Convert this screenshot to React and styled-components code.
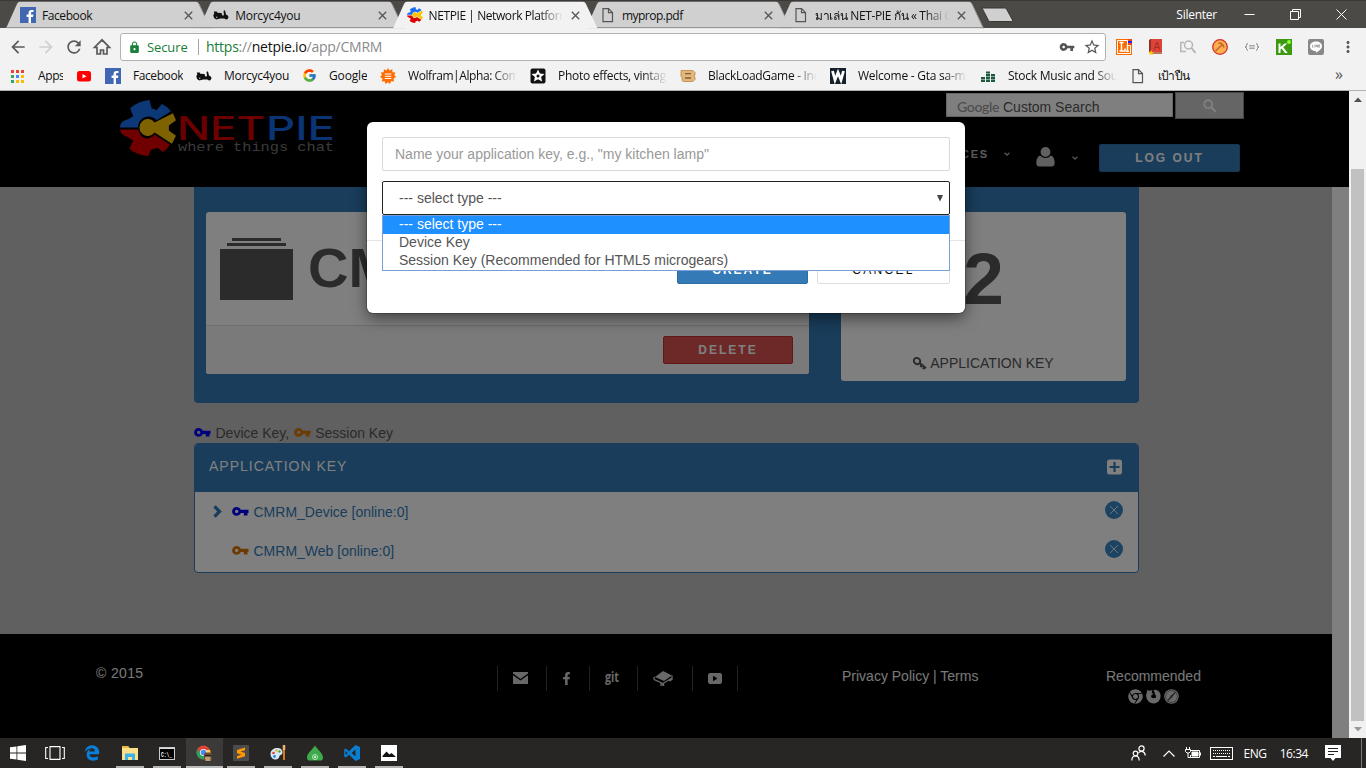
import React from 'react';
import styled, { createGlobalStyle } from 'styled-components';
import { MdArrowBack, MdArrowForward, MdRefresh, MdLock, MdVpnKey, MdStarBorder, MdMoreVert } from 'react-icons/md';
import { FaFacebookF, FaChrome, FaEdgeLegacy } from 'react-icons/fa';
import { FcGoogle } from 'react-icons/fc';

const GlobalStyle = createGlobalStyle`
  * { box-sizing: border-box; }
  body { margin: 0; overflow: hidden; }
  svg { display: block; flex: none; }
`;

const uiFont = '"Open Sans", "Noto Sans", sans-serif';
const pageFont = '"Liberation Sans", Arial, sans-serif';

const Screen = styled.div`
  width: 1366px;
  height: 768px;
  display: flex;
  flex-direction: column;
  overflow: hidden;
  font-family: ${uiFont};
  font-size: 12px;
  color: #111;
`;

/* ---------- browser tabs ---------- */
const TabStrip = styled.div`
  height: 28px;
  flex: none;
  display: flex;
  padding-left: 6px;
  background: #4b4a47;
  border-top: 1px solid #3d3838;
`;
const TabBox = styled.div`
  position: relative;
  z-index: ${p => (p.$active ? 2 : 1)};
  width: 193.3px;
  flex: none;
  height: 27px;
  display: flex;
  align-items: center;
  padding: 1px 5px 0 14px;
`;
const TabShape = styled.svg`
  position: absolute;
  left: 0;
  top: 0;
  z-index: -1;
`;
const FadeText = styled.span`
  width: ${p => p.$w}px;
  flex: none;
  white-space: nowrap;
  overflow: hidden;
  letter-spacing: ${p => p.$ls ?? -0.42}px;
  ${p => p.$fade && 'mask-image: linear-gradient(to right, #000 calc(100% - 24px), transparent);'}
`;
const TabTitle = styled(FadeText)`
  margin-left: 6px;
  flex: 1;
`;
const CloseX = styled.svg`
  margin: 0 1px 0 8px;
`;
const NewTab = styled.svg`
  margin: 6px 0 0 9px;
`;
const WindowControls = styled.div`
  margin-left: auto;
  padding-right: 19px;
  display: flex;
  align-items: center;
  color: #fff;
  letter-spacing: -0.25px;
  svg { margin-left: 35px; }
  svg:first-of-type { margin-left: 27px; }
`;

/* ---------- toolbar and bookmarks ---------- */
const Toolbar = styled.div`
  height: 34px;
  flex: none;
  display: flex;
  align-items: center;
  padding: 4px 8px 0 8px;
  background: #f2f2f2;
`;
const NavIcons = styled.div`
  display: flex;
  gap: 8px;
  width: 112px;
  color: #5a5a5a;
  svg:nth-child(2) { color: #cfcfcf; }
`;
const Omnibox = styled.div`
  width: 986px;
  height: 28px;
  display: flex;
  align-items: center;
  gap: 8px;
  padding: 0 4px 0 7px;
  background: #fff;
  border: 1px solid #b2b2b2;
  border-radius: 3px;
  font-size: 14px;
  color: #8a8a8a;
  > svg { color: #555; }
`;
const Secure = styled.span`
  display: flex;
  align-items: center;
  gap: 6px;
  color: #188038;
  width: 71px;
  font-size: 13px;
  border-right: 1px solid #a5a5a5;
  line-height: 16px;
  letter-spacing: -0.1px;
`;
const Url = styled.span`
  flex: 1;
  margin-left: -1px;
  margin-top: -1px;
  letter-spacing: -0.25px;
  b { font-weight: 400; color: #111; }
  i { font-style: normal; color: #188038; }
`;
const Extensions = styled.div`
  display: flex;
  align-items: center;
  gap: 16px;
  margin-left: 10px;
  > svg:last-child { margin-left: -1px; color: #555; }
`;
const Bookmarks = styled.div`
  height: 29px;
  flex: none;
  display: flex;
  align-items: center;
  gap: 13px;
  padding: 0 0 1px 10px;
  background: #f2f2f2;
  border-bottom: 1px solid #b0b0b0;
`;
const BookmarkItem = styled.div`
  display: flex;
  align-items: center;
  gap: 12px;
`;
const Overflow = styled.span`
  margin: -3px 0 0 auto;
  padding-right: 23px;
  font-size: 16px;
  color: #555;
`;

/* ---------- page ---------- */
const Viewport = styled.div`
  position: relative;
  height: 647px;
  flex: none;
  display: flex;
  font-family: ${pageFont};
  font-size: 14px;
`;
const Page = styled.div`
  width: 1349px;
  display: flex;
  flex-direction: column;
  background: #fff;
`;
const Header = styled.header`
  height: 96px;
  flex: none;
  display: flex;
  justify-content: space-between;
  padding: 0 105px 0 119px;
  background: #000;
`;
const Logo = styled.svg`
  margin-top: 8px;
`;
const HeaderRight = styled.div`
  display: flex;
  flex-direction: column;
  width: 298px;
`;
const SearchRow = styled.div`
  display: flex;
  align-items: flex-start;
  gap: 2px;
  padding-top: 1px;
`;
const SearchBox = styled.div`
  width: 227px;
  height: 24px;
  margin-top: 1px;
  padding-left: 10px;
  background: #fff;
  border: 1px solid #cfcfcf;
  line-height: 26px;
  color: #555;
  span {
    font-family: Lato, sans-serif;
    font-size: 14px;
    font-weight: 500;
    letter-spacing: -0.35px;
    color: #9a9a9a;
    margin-right: 4px;
  }
`;
const SearchButton = styled.div`
  width: 69px;
  height: 27px;
  display: flex;
  align-items: center;
  justify-content: center;
  background: #cbcbcb;
  border: 1px solid #8c8c8c;
`;
const NavRow = styled.div`
  display: flex;
  justify-content: flex-end;
  align-items: center;
  margin-top: 25px;
  height: 28px;
  padding-right: 4px;
`;
const NavLabel = styled.span`
  font-size: 11px;
  font-weight: 700;
  letter-spacing: 1.8px;
  color: #bbb;
  margin: -8px 15px 0 0;
`;
const Caret = styled.svg`
  margin-top: ${p => p.$top}px;
  margin-right: ${p => p.$right}px;
`;
const UserGlyph = styled.svg`
  margin: -3px 17px 0 0;
`;
const Button = styled.div`
  width: ${p => p.$w}px;
  height: 28px;
  flex: none;
  display: flex;
  align-items: center;
  justify-content: center;
  background: ${p => p.$bg};
  border: 1px solid ${p => p.$border};
  border-radius: 2px;
  color: ${p => p.$color ?? '#fff'};
  font-size: 12px;
  font-weight: ${p => p.$weight ?? 700};
  letter-spacing: ${p => p.$ls ?? 2}px;
`;
const Body = styled.div`
  width: 1332px;
  height: 447px;
  flex: none;
  padding-left: 194px;
  background: #c0c0c0;
`;
const Hero = styled.section`
  width: 945px;
  height: 216px;
  display: flex;
  justify-content: space-between;
  align-items: flex-start;
  padding: 25px 13px 0 12px;
  background: #337ab7;
  border-radius: 0 0 4px 4px;
`;
const AppCard = styled.div`
  width: 603px;
  height: 162px;
  background: #fff;
  border-radius: 3px;
  overflow: hidden;
`;
const AppTitle = styled.div`
  display: flex;
  align-items: center;
  height: 113px;
  padding: 0 0 2px 14px;
  font-size: 56px;
  font-weight: 700;
  color: #565656;
  gap: 15px;
  svg { margin-top: 2px; }
`;
const AppFooter = styled.div`
  height: 49px;
  display: flex;
  align-items: center;
  justify-content: flex-end;
  padding-right: 16px;
  background: #f5f5f5;
  border-top: 1px solid #ddd;
`;
const CountCard = styled.div`
  width: 285px;
  height: 169px;
  display: flex;
  flex-direction: column;
  align-items: center;
  background: #fff;
  border-radius: 3px;
  color: #555;
`;
const Count = styled.div`
  font-size: 73px;
  line-height: 80px;
  font-weight: 700;
  color: #565656;
  margin-top: 27px;
`;
const CountLabel = styled.div`
  display: flex;
  align-items: center;
  gap: 3px;
  margin-top: 36px;
`;
const Legend = styled.div`
  display: flex;
  align-items: center;
  gap: 4.5px;
  height: 20px;
  margin-top: 20px;
  color: #555;
`;
const KeyPanel = styled.section`
  width: 945px;
  height: 130px;
  background: #fff;
  border: 1px solid #337ab7;
  border-radius: 4px;
  overflow: hidden;
`;
const KeyPanelHead = styled.div`
  height: 48px;
  display: flex;
  align-items: center;
  justify-content: space-between;
  padding: 0 16px 4px 14px;
  background: #337ab7;
  color: #fff;
  letter-spacing: 1px;
  svg { margin-top: 2px; }
`;
const KeyRow = styled.div`
  height: 39px;
  display: flex;
  align-items: center;
  padding: 0 15px 0 17px;
  color: #337ab7;
  > span { flex: 1; margin-left: 4.5px; }
  > svg:last-child { margin-top: -4px; }
`;
const ChevronSlot = styled.div`
  width: 20px;
`;
const Footer = styled.footer`
  width: 1332px;
  height: 104px;
  display: flex;
  padding: 31px 0 0 96px;
  background: #000;
  color: #f0f0f0;
`;
const Copyright = styled.div`
  width: 401px;
  letter-spacing: 0.35px;
`;
const SocialList = styled.div`
  display: flex;
  height: 25px;
  width: 345px;
  margin-top: 1px;
`;
const Social = styled.div`
  width: ${p => p.$w}px;
  height: 25px;
  display: flex;
  align-items: center;
  justify-content: center;
  padding: 0 ${p => p.$pad ?? 4}px 1px 0;
  border-left: 1px solid #444;
  color: #d0d0d0;
`;
const Links = styled.div`
  width: 264px;
  padding-top: 3px;
`;
const Recommended = styled.div`
  padding-top: 3px;
  display: flex;
  flex-direction: column;
  align-items: center;
  gap: 5px;
  height: 40px;
  div { display: flex; gap: 3px; color: #d5d5d5; }
`;

/* ---------- modal ---------- */
const Overlay = styled.div`
  position: absolute;
  inset: 0 17px 0 0;
  padding-left: 367px;
  padding-top: 31px;
  overflow: hidden;
  background: rgba(0, 0, 0, 0.5);
`;
const Modal = styled.div`
  position: relative;
  width: 598px;
  height: 191px;
  background: #fff;
  border-radius: 6px;
  box-shadow: 0 5px 15px rgba(0, 0, 0, 0.5), 0 0 0 1px rgba(0, 0, 0, 0.2);
`;
const ModalBody = styled.div`
  height: 119px;
  padding: 15px 15px 0;
  border-bottom: 1px solid #e5e5e5;
`;
const Field = styled.div`
  height: 34px;
  display: flex;
  align-items: center;
  justify-content: space-between;
  padding: 0 ${p => (p.$select ? '6px 0 16px' : '12px')};
  margin-bottom: 10px;
  border: 1px solid ${p => (p.$select ? '#222' : '#d9d9d9')};
  border-radius: 2px;
  color: ${p => (p.$select ? '#555' : '#999')};
`;
const ModalFooter = styled.div`
  display: flex;
  justify-content: flex-end;
  gap: 9px;
  padding: 15px 15px 0;
`;
const Options = styled.div`
  position: absolute;
  left: 15px;
  top: 93px;
  width: 568px;
  height: 56px;
  background: #fff;
  border: 1px solid #7a9fd6;
`;
const Option = styled.div`
  height: 18px;
  line-height: 16px;
  padding-left: 16px;
  color: ${p => (p.$on ? '#fff' : '#555')};
  background: ${p => (p.$on ? '#1e90ff' : '#fff')};
`;

/* ---------- scrollbar ---------- */
const Scrollbar = styled.div`
  width: 17px;
  display: flex;
  flex-direction: column;
  align-items: center;
  padding: 6px 0 6px;
  background: #f1f1f1;
`;
const Thumb = styled.div`
  width: 13px;
  height: 552px;
  margin: 67px 0 auto;
  background: #c1c1c1;
`;

/* ---------- taskbar ---------- */
const Taskbar = styled.div`
  height: 30px;
  flex: none;
  display: flex;
  background: #272624;
  color: #fff;
`;
const Task = styled.div`
  width: ${p => p.$w ?? 37}px;
  height: 30px;
  display: flex;
  align-items: center;
  justify-content: center;
  background: ${p => (p.$active ? '#3b3a39' : 'none')};
  box-shadow: ${p => (p.$active ? 'inset 0 -2px #bdbcba' : 'none')};
`;
const Running = styled.div`
  width: 28px;
  height: 30px;
  display: flex;
  align-items: center;
  justify-content: center;
  border-bottom: ${p => (p.$line ? '2px solid #b5b4b2' : '0')};
  padding-top: ${p => (p.$line ? 2 : 0)}px;
`;
const Tray = styled.div`
  margin-left: auto;
  display: flex;
  align-items: center;
  padding-right: 4px;
  font-size: 12px;
`;
const TrayItem = styled.div`
  margin-right: ${p => p.$r}px;
  letter-spacing: -0.45px;
`;
const DesktopEdge = styled.div`
  width: 1px;
  height: 30px;
  background: #777;
`;

/* ---------- drawings ---------- */
const FacebookIcon = () => (
  <svg width="16" height="16" viewBox="0 0 16 16">
    <rect width="16" height="16" fill="#4267b2" />
    <path d="M11 16V10h2l.4-2.4H11V6.2c0-.8.4-1.2 1.200-1.200h1.300V2.900h-2C9.500 2.900 8.600 4.200 8.600 5.900v1.700h-2V10h2v6z" fill="#fff" />
  </svg>
);
const Gear = ({ size = 16 }) => (
  <svg width={size} height={size} viewBox="0 0 55 55">
    <path d="M0 27C0 23 3 20 8 19L13 16 10 8Q18 1 29 0L31 8 36 10 41 4Q46 6 50 11L36 20C29 12 17 18 18 27z" fill="#1a70f0" />
    <path d="M0 29H18C20 39 29 40 34 34L49 44Q46 49 42 51L37 47 30 49 28 55Q18 55 9 48L13 40 7 36Q1 35 0 29z" fill="#e00000" />
    <path d="M34 22 52 13 55 20 48 25V30L55 35 51 43 34 32A8.300 8.300 0 1 1 34 22z" fill="#ffc500" />
  </svg>
);
const Scooter = () => (
  <svg width="16" height="16" viewBox="0 0 16 16" fill="#111">
    <path d="M.8 4.500h3l.5 1.200 4.200.3.800 2.500 1.700-.3L10.500 4l1.300-.8.500 1.300L13 7.500l2 1.200.5 1.800-2-.7-1.500 1.700H7L5.500 12 1 11 .3 8l1-1.500z" />
    <circle cx="3.700" cy="10" r="2.400" /><circle cx="13.300" cy="10.500" r="1.900" /><circle cx="3.700" cy="10.200" r=".8" fill="#aaa" />
  </svg>
);
const PageIcon = () => (
  <svg width="16" height="16" viewBox="0 0 16 16" fill="none" stroke="#555" strokeWidth="1.200">
    <path d="M3 1.600h5.500l4 4v9H3z" /><path d="M8.500 1.600v4h4" />
  </svg>
);
const AppsIcon = () => (
  <svg width="16" height="16" viewBox="0 0 16 16">
    {['#ea4335', '#ea4335', '#ea4335', '#34a853', '#4285f4', '#fbbc05', '#34a853', '#fbbc05', '#fbbc05'].map((c, i) => (
      <rect key={i} x={1 + (i % 3) * 5} y={2 + Math.floor(i / 3) * 5} width="3" height="3" fill={c} />
    ))}
  </svg>
);
const YoutubeIcon = () => (
  <svg width="16" height="16" viewBox="0 0 16 16"><rect x="1" y="3" width="14" height="10.500" rx="2.500" fill="#f00" /><path d="M6.500 6v4.600l4-2.300z" fill="#fff" /></svg>
);
const WolframIcon = () => (
  <svg width="16" height="16" viewBox="0 0 16 16">
    <path d="M8 0L9.500 2.500 12.300 1.200 12.500 4.200 15.500 4.500 14.200 7 16 9 13.500 10.500 14 13.500 11 13.300 10 16 8 14.200 5.500 16 4.700 13.200 1.800 13.500 2.500 10.500 0 9 2 7 .7 4.400 3.600 4.200 4 1.300 6.600 2.500z" fill="#ff6d00" />
    <path d="M4.800 6h6.500M4.800 8.300h6.500M4.800 10.500h6.500" stroke="#fff" strokeWidth="1" />
  </svg>
);
const PolarrIcon = () => (
  <svg width="16" height="16" viewBox="0 0 16 16"><rect x=".5" y=".5" width="15" height="15" rx="2" fill="#111" /><path d="M8 1.500l1.900 4 4.600.5-3.400 3 1 4.600L8 11.300l-4.100 2.300 1-4.600-3.400-3L6.100 5.500z" fill="#fff" /><circle cx="8" cy="8" r="1.500" fill="#111" /></svg>
);
const BlackLoadIcon = () => (
  <svg width="16" height="16" viewBox="0 0 16 16"><path d="M1 2.500h12l2 2v2.500l-1 1 1 1.500v2l-2 2H3l-1-1V9.500L1 8.500z" fill="#e3b67c" stroke="#b98743" strokeWidth=".8" /><path d="M5 5.700h6M5 10h6" stroke="#806038" strokeWidth="1.300" /></svg>
);
const WIcon = () => (
  <svg width="16" height="16" viewBox="0 0 16 16"><rect width="16" height="16" fill="#14202b" /><path d="M2.500 3l2.500 9L8 4.500 11 12l2.500-9" fill="none" stroke="#fff" strokeWidth="2.800" /></svg>
);
const BarsIcon = () => (
  <svg width="16" height="16" viewBox="0 0 16 16"><path d="M3 14V8.500M8 14V3.500M13 14V6" stroke="#1d5a40" strokeWidth="4" strokeDasharray="2.300 .5" /></svg>
);
const HomeIcon = () => (
  <svg width="20" height="20" viewBox="0 0 20 20" fill="none" stroke="#5a5a5a" strokeWidth="1.700"><path d="M10 2.800L2.500 10.500H5V17h3.500v-4h3v4H15v-6.500h2.500z" /></svg>
);
const Magnifier = () => (
  <svg width="14" height="14" viewBox="0 0 14 14" fill="none" stroke="#fff"><circle cx="5.200" cy="5.200" r="3.900" strokeWidth="1.900" /><path d="M8 8l4.800 4.800" strokeWidth="2.300" /></svg>
);
const Close = () => (
  <CloseX width="9" height="9" viewBox="0 0 9 9" stroke="#555" strokeWidth="1.300"><path d="M.8.8l7.400 7.400M8.200.8L.8 8.200" /></CloseX>
);

const Tab = ({ icon, title, active, fade, ls }) => (
  <TabBox $active={active}>
    <TabShape width="206" height="28" viewBox="0 0 206 28">
      <path d="M0 27.500 L11 3 Q12 .8 14 .8 H190 Q192 .8 193 3 L204.500 27.500z" fill={active ? '#f2f2f2' : '#d0d0d0'} />
      {!active && <path d="M0 26.500H204.500M204.500 27.500L193 3" stroke="#959595" fill="none" />}
    </TabShape>
    {icon}
    <TabTitle $fade={fade} $ls={ls}>{title}</TabTitle>
    <Close />
  </TabBox>
);
const Bookmark = ({ icon, text, w, fade, ls }) => (
  <BookmarkItem>{icon}{text && <FadeText $w={w} $fade={fade} $ls={ls}>{text}</FadeText>}</BookmarkItem>
);
const DeleteKey = () => (
  <svg width="18" height="18" viewBox="0 0 18 18"><circle cx="9" cy="9" r="9" fill="#3a87c4" /><path d="M5 5l8 8M13 5l-8 8" stroke="#e6e6e6" strokeWidth="1" /></svg>
);
const KeyGlyph = ({ color }) => (
  <svg width="17" height="12" viewBox="0 0 17 12"><path d="M4.500 1C6.500 1 8 2 8.800 3.800H16.500V7H15.500V9.500H11.800V7H8.800C8 8.700 6.500 9.800 4.500 9.800A4.400 4.400 0 0 1 4.500 1zM4.700 3.700A1.700 1.700 0 1 0 4.700 7.100 1.700 1.700 0 0 0 4.700 3.700z" fill={color} fillRule="evenodd" /></svg>
);
const Down = ({ top, right }) => (
  <Caret $top={top} $right={right} width="6" height="4" viewBox="0 0 6 4" fill="none" stroke="#aaa" strokeWidth="1.300"><path d="M.5.7L3 3 5.500.7" /></Caret>
);

const tabs = [
  { icon: <FacebookIcon />, title: 'Facebook' },
  { icon: <Scooter />, title: 'Morcyc4you', ls: -0.28 },
  { icon: <Gear />, title: 'NETPIE | Network Platform', active: true, fade: true },
  { icon: <PageIcon />, title: 'myprop.pdf', ls: -0.5 },
  { icon: <PageIcon />, title: 'มาเล่น NET-PIE กัน « Thai C', fade: true, ls: -0.35 },
];
const bookmarks = [
  { icon: <AppsIcon />, text: 'Apps', w: 25, ls: -0.4 },
  { icon: <YoutubeIcon /> },
  { icon: <FacebookIcon />, text: 'Facebook', w: 50 },
  { icon: <Scooter />, text: 'Morcyc4you', w: 65, ls: -0.28 },
  { icon: <FcGoogle size={15} />, text: 'Google', w: 38, ls: -0.15 },
  { icon: <WolframIcon />, text: 'Wolfram|Alpha: Comp', w: 109, fade: true },
  { icon: <PolarrIcon />, text: 'Photo effects, vintage', w: 109, fade: true, ls: -0.28 },
  { icon: <BlackLoadIcon />, text: 'BlackLoadGame - Inde', w: 109, fade: true, ls: -0.3 },
  { icon: <WIcon />, text: 'Welcome - Gta sa-mp', w: 109, fade: true, ls: -0.25 },
  { icon: <BarsIcon />, text: 'Stock Music and Soun', w: 109, fade: true, ls: -0.25 },
  { icon: <PageIcon />, text: 'เป้าปืน', w: 40, ls: -0.8 },
];

const ExtensionIcons = () => (
  <Extensions>
    <svg width="16" height="16" viewBox="0 0 16 16"><rect width="16" height="16" fill="#ff6a00" /><path d="M1.500 1.500h10v5h3v8h-13z" fill="none" stroke="#fff" /><path d="M3.500 3.500h4M5.500 3.500v8.500M3.500 12h5.500V9.500M11.500 6v6M10 12.300h3" stroke="#fff" strokeWidth="1.500" fill="none" /><path d="M12 1h4M12 5h4" stroke="#e22" strokeWidth="1.200" /><path d="M12 3h4" stroke="#22f" strokeWidth="2" /></svg>
    <svg width="16" height="16" viewBox="0 0 16 16"><path d="M2 0h12v13H2z" fill="#dc4437" /><path d="M1 1l2-1v13l-2 1z" fill="#962d25" /><path d="M2 13h12v2H2z" fill="#b87566" /><path d="M6 11l3-8 3 8M7 8.500h4" stroke="#a82a20" fill="none" /><path d="M3 11l1 2 2 .3-1.500 1.200.3 1.500L3 15.200 1.300 16l.4-1.700L.500 13l1.700-.2z" fill="#ffc400" /></svg>
    <svg width="16" height="16" viewBox="0 0 16 16" fill="none" stroke="#b5b5b5" strokeWidth="1.500"><path d="M4 3.500H.8v9H6" /><circle cx="8.500" cy="6" r="4" /><path d="M11.500 9l4 5" strokeWidth="2" /></svg>
    <svg width="16" height="16" viewBox="0 0 16 16"><circle cx="8" cy="8" r="7.300" fill="#ffad4d" stroke="#d3302a" strokeWidth="1.300" /><path d="M3.500 12l6.500-6M6.500 4.500c2-1 4.500 0 5.500 4" stroke="#b8692c" strokeWidth="1.500" fill="none" /></svg>
    <svg width="16" height="16" viewBox="0 0 16 16" fill="none" stroke="#888"><path d="M4 4.500q-1.500 0-1.500 2T1 8q1.500 0 1.500 1.500T4 11.500M12 4.500q1.500 0 1.500 2T15 8q-1.500 0-1.500 1.500t-1.500 2" /><path d="M5.500 6.500h5M5.500 9.500h5" strokeDasharray="1.300 .5" /><path d="M5.500 8h5" strokeDasharray="1.300 .5" /></svg>
    <svg width="16" height="16" viewBox="0 0 16 16"><rect width="16" height="16" fill="#3c9a10" /><path d="M2.500 4.500v9.500h2v-3.500l1-1 3.500 4.500h2.700L7.200 8.200l4-3.700H8.500L4.500 8V4.500z" fill="#fff" /><circle cx="13" cy="3" r="2" fill="#8f3" /></svg>
    <svg width="16" height="16" viewBox="0 0 16 16"><rect width="16" height="16" rx="2" fill="#888" /><path d="M8 2.500c3.300 0 6 2 6 4.700 0 2.300-2.500 4-5.500 6.300-.6.400-.6-.5-.5-1.300-3.500-.2-6-2.300-6-5 0-2.700 2.700-4.700 6-4.700z" fill="#fff" /><path d="M4.500 5.700v2.500h1.200M6.800 5.700v2.500M8 8.200V5.700l1.500 2.500V5.700M12 5.800h-1.300v2.400H12M10.700 7H12" stroke="#777" strokeWidth=".6" fill="none" /></svg>
    <MdMoreVert size={18} />
  </Extensions>
);

const BrowserChrome = () => (
  <>
    <TabStrip>
      {tabs.map(t => <Tab key={t.title} {...t} />)}
      <NewTab width="33" height="16" viewBox="0 0 33 16"><path d="M1 1h22.500q1.500 0 2 1l6 11q.5 1.500-1 1.500H9.500q-1.500 0-2-1z" fill="#d0d0d0" stroke="#383735" /></NewTab>
      <WindowControls>
        Silenter
        <svg width="11" height="11" viewBox="0 0 11 11"><path d="M.5 5.500h10" stroke="#fff" /></svg>
        <svg width="11" height="11" viewBox="0 0 11 11" fill="none" stroke="#fff"><path d="M.5 2.500h8v8h-8zM2.500 2.500v-2h8v8h-2" /></svg>
        <svg width="11" height="11" viewBox="0 0 11 11" stroke="#fff"><path d="M.5.5l10 10M10.500.5l-10 10" /></svg>
      </WindowControls>
    </TabStrip>
    <Toolbar>
      <NavIcons><MdArrowBack size={20} /><MdArrowForward size={20} /><MdRefresh size={20} /><HomeIcon /></NavIcons>
      <Omnibox>
        <Secure><MdLock size={13} />Secure</Secure>
        <Url><i>https</i>://<b>netpie.io</b>/app/CMRM</Url>
        <MdVpnKey size={16} />
        <MdStarBorder size={18} />
      </Omnibox>
      <ExtensionIcons />
    </Toolbar>
    <Bookmarks>
      {bookmarks.map((b, i) => <Bookmark key={i} {...b} />)}
      <Overflow>»</Overflow>
    </Bookmarks>
  </>
);

const PageHeader = () => (
  <Header>
    <Logo width="216" height="60" viewBox="0 0 216 60">
      <svg x="1" y="1" width="56" height="57"><Gear size={56} /></svg>
      <g fontFamily="Inter, sans-serif" fontSize="32" fontWeight="500">
        <text x="58" y="41" fill="#d80000" textLength="88" lengthAdjust="spacingAndGlyphs">NET</text>
        <text x="147" y="41" fill="#1668e8" textLength="69" lengthAdjust="spacingAndGlyphs">PIE</text>
      </g>
      <text x="59" y="52" fill="#777" fontFamily="Liberation Mono" fontSize="13" textLength="156" lengthAdjust="spacingAndGlyphs">where things chat</text>
    </Logo>
    <HeaderRight>
      <SearchRow>
        <SearchBox><span>Google</span>Custom Search</SearchBox>
        <SearchButton><Magnifier /></SearchButton>
      </SearchRow>
      <NavRow>
        <NavLabel>SERVICES</NavLabel>
        <Down top={-8} right={26} />
        <UserGlyph width="19" height="20" viewBox="0 0 19 20" fill="#c0c0c0">
          <ellipse cx="9.500" cy="5" rx="4.900" ry="5" />
          <path d="M4 8.500q5.500 5 11 0Q18.700 10 18.700 16.500 18.500 19.500 15.500 19.500H3.500Q.5 19.500.3 16.500.3 10 4 8.500z" />
        </UserGlyph>
        <Down top={0} right={21} />
        <Button $w={141} $bg="#337ab7" $border="#2e6da4">LOG OUT</Button>
      </NavRow>
    </HeaderRight>
  </Header>
);

const KeyDialog = () => (
  <Overlay>
    <Modal>
      <ModalBody>
        <Field>Name your application key, e.g., "my kitchen lamp"</Field>
        <Field $select>
          --- select type ---
          <svg width="6" height="7" viewBox="0 0 6 7"><path d="M0 0h6l-3 6.500z" fill="#444" /></svg>
        </Field>
      </ModalBody>
      <ModalFooter>
        <Button $w={131} $bg="#337ab7" $border="#2e6da4">CREATE</Button>
        <Button $w={133} $bg="#fff" $border="#ddd" $color="#111" $weight={400} $ls={2.3}>CANCEL</Button>
      </ModalFooter>
      <Options>
        <Option $on>--- select type ---</Option>
        <Option>Device Key</Option>
        <Option>Session Key (Recommended for HTML5 microgears)</Option>
      </Options>
    </Modal>
  </Overlay>
);

const tasks = [
  [<svg width="20" height="14" viewBox="0 0 20 14" fill="none" stroke="#fff" strokeWidth="1.100"><path d="M5 .6h10v12.800H5zM3 1.500H.7v11H3M17 1.500h2.300v11H17" /></svg>, false],
  [<FaEdgeLegacy size={16} color="#0a7fd9" />, false],
  [<svg width="18" height="16" viewBox="0 0 18 16"><path d="M1 1h6l1.500 2H17v12H1z" fill="#ffe08a" /><path d="M1 1h6l1.500 2H1z" fill="#e8b84a" /><path d="M4 15V8.500h10V15h-3v-3H7v3z" fill="#39b3ee" /></svg>, true],
  [<svg width="16" height="13" viewBox="0 0 16 13"><rect x=".5" y=".5" width="15" height="12" fill="#000" stroke="#ccc" /><path d="M1 1.500h14" stroke="#ddd" /><text x="2" y="9.500" fontSize="7" fontFamily="Liberation Mono" fontWeight="700" fill="#fff" textLength="11" lengthAdjust="spacingAndGlyphs">C:\_</text></svg>, true],
  [<svg width="17" height="17" viewBox="0 0 17 17"><circle cx="7.500" cy="7.500" r="7" fill="#dc4437" /><path d="M1.500 4A7 7 0 0 0 7.500 14.500L10 9H5z" fill="#25a35a" /><path d="M14 5A7 7 0 0 1 8 14.500L10.500 5z" fill="#ffcd40" /><circle cx="7.500" cy="7.500" r="3.600" fill="#eee" /><circle cx="7.500" cy="7.500" r="2.700" fill="#4a8af4" /><path d="M8 9l1.500-1.500h5L16 9v6h-1l-.5-3h-5L9 15H8z" fill="#6c4a2e" /><path d="M9.500 11h5v5h-5z" fill="#c29b78" /><path d="M9 10h6.500v1.500H9z" fill="#222" /></svg>, 'active'],
  [<svg width="16" height="16" viewBox="0 0 16 16"><rect width="16" height="16" rx="1" fill="#4b4b4b" /><path d="M12 2.500L4 5v3.300l4.500 1.400L4 11v2.800l8-2.500V8L7.500 6.600 12 5.200z" fill="#ff9800" /></svg>, true],
  [<svg width="16" height="16" viewBox="0 0 16 16"><path d="M.5 9C.5 5 4 2.500 8 3c4 .5 5.500 4 4 6-1 1.300-2 .5-2.500 2-.5 2-1.500 3.500-4 3.500S.5 12.500.5 9z" fill="#d4e8f5" /><circle cx="3.500" cy="8" r="1.300" fill="#e03c31" /><circle cx="6.500" cy="5.500" r="1.200" fill="#f5a623" /><circle cx="4.500" cy="11.500" r="1.400" fill="#2e8bd8" /><circle cx="9.500" cy="6.500" r="1.200" fill="#39a845" /><path d="M14 1v14" stroke="#d8741e" strokeWidth="2" /><path d="M14 0v5" stroke="#f0b070" strokeWidth="2.500" /></svg>, true],
  [<svg width="16" height="16" viewBox="0 0 16 16"><path d="M8 .5C10 4 16 8 16 12.500c0 2-1 3-2 3H2c-1 0-2-1-2-3C0 8 6 4 8 .5z" fill="#3daa4b" /><circle cx="8" cy="12" r="2.500" fill="none" stroke="#b9e5bd" /><circle cx="8" cy="12" r="1" fill="#fff" /></svg>, true],
  [<svg width="16" height="16" viewBox="0 0 16 16"><path d="M11.500 0L16 2v12l-4.500 2L5 9.800 1.700 12.500.2 11.500V4.500L1.700 3.500 5 6.200zM11.500 4.500L7.500 8l4 3.500zM1.600 6v4l2-2z" fill="#0a7fd1" fillRule="evenodd" /></svg>, true],
  [<svg width="16" height="16" viewBox="0 0 16 16"><rect width="16" height="16" fill="#fff" /><path d="M1.500 12V11l4-4.500L8.500 9.500 10.500 8l4 3.500v.5z" fill="#111" /></svg>, true],
];

const SystemBar = () => (
  <Taskbar>
    <Task $w={36}><svg width="16" height="16" viewBox="0 0 16 16" fill="#fff"><path d="M0 2.300L6.500 1.400v6.200H0zM7.300 1.300L16 0v7.600H7.300zM0 8.400h6.500v6.200L0 13.700zM7.300 8.400H16V16l-8.700-1.200z" /></svg></Task>
    {tasks.map(([icon, state], i) => (
      <Task key={i} $w={i === 1 ? 38.5 : 37} $active={state === 'active'}><Running $line={state === true}>{icon}</Running></Task>
    ))}
    <Tray>
      <TrayItem $r={17}><svg width="15" height="16" viewBox="0 0 15 16" fill="none" stroke="#fff" strokeWidth="1.200"><circle cx="4.500" cy="8.500" r="2.300" /><path d="M.8 15.500c0-6 7.400-6 7.400 0" /><circle cx="10.500" cy="3.500" r="2.600" /><path d="M7.500 8c2-2.500 6.500-2 6.700 2.500" /></svg></TrayItem>
      <TrayItem $r={10}><svg width="12" height="7" viewBox="0 0 12 7" fill="none" stroke="#fff" strokeWidth="1.200"><path d="M.5 6.500L6 1l5.500 5.500" /></svg></TrayItem>
      <TrayItem $r={8}><svg width="17" height="12" viewBox="0 0 17 12" fill="none" stroke="#fff"><path d="M5.500 3.500h9v7h-9V8M15.500 5.500v3" /><path d="M7 5h6v4H7z" fill="#fff" /><path d="M1.500 0v2.500M4.500 0v2.500M.5 2.500h5v2l-1.500 1.500H2L.5 4.500zM3 6v4.500h2.500" /></svg></TrayItem>
      <TrayItem $r={11}><svg width="23" height="13" viewBox="0 0 23 13" fill="none" stroke="#fff"><rect x=".5" y=".5" width="22" height="12" /><path d="M3 3.500h17M3 6.500h17" strokeDasharray="1 1" /><path d="M3 9.500h17" strokeDasharray="2 1 11 1 2" /></svg></TrayItem>
      <TrayItem $r={13}>ENG</TrayItem>
      <TrayItem $r={17}>16:34</TrayItem>
      <TrayItem $r={20}><svg width="16" height="16" viewBox="0 0 16 16"><path d="M0 0h16v13h-5.500L8 16l-2.500-3H0z" fill="#fff" /><path d="M3 3.500h10M3 6.500h10M3 9.500h6" stroke="#222" /></svg></TrayItem>
      <DesktopEdge />
    </Tray>
  </Taskbar>
);

export default function App() {
  return (
    <Screen>
      <GlobalStyle />
      <BrowserChrome />
      <Viewport>
        <Page>
          <PageHeader />
          <Body>
            <Hero>
              <AppCard>
                <AppTitle>
                  <svg width="73" height="63" viewBox="0 0 73 63" fill="#565656"><path d="M12 1h49v3H12zM7 6h59v3H7zM0 12h73v51H0z" /></svg>
                  CMRM
                </AppTitle>
                <AppFooter><Button $w={130} $bg="#d9534f" $border="#c9302c">DELETE</Button></AppFooter>
              </AppCard>
              <CountCard>
                <Count>2</Count>
                <CountLabel>
                  <svg width="14" height="13" viewBox="0 0 14 13" fill="none" stroke="#565656"><ellipse cx="4" cy="4" rx="3.200" ry="2.900" strokeWidth="1.900" transform="rotate(40 4 4)" /><path d="M6.200 5.600L13 11.300M9 8L7.300 10M11.500 10L10 12" strokeWidth="2.100" /></svg>
                  APPLICATION KEY
                </CountLabel>
              </CountCard>
            </Hero>
            <Legend>
              <KeyGlyph color="#0000ff" />Device Key,
              <KeyGlyph color="#d97708" />Session Key
            </Legend>
            <KeyPanel>
              <KeyPanelHead>
                APPLICATION KEY
                <svg width="15" height="16" viewBox="0 0 15 16"><rect y=".5" width="15" height="15" rx="2.500" fill="#fff" /><path d="M7.500 3v10M2.500 8h10" stroke="#337ab7" strokeWidth="2.200" /></svg>
              </KeyPanelHead>
              <KeyRow><ChevronSlot><svg width="11" height="13" viewBox="0 0 11 13" fill="none" stroke="#337ab7" strokeWidth="3.300"><path d="M2.500 1.300l5 5.200-5 5.200" /></svg></ChevronSlot><KeyGlyph color="#0000ff" /><span>CMRM_Device [online:0]</span><DeleteKey /></KeyRow>
              <KeyRow><ChevronSlot /><KeyGlyph color="#d97708" /><span>CMRM_Web [online:0]</span><DeleteKey /></KeyRow>
            </KeyPanel>
          </Body>
          <Footer>
            <Copyright>© 2015</Copyright>
            <SocialList>
              <Social $w={49}><svg width="15" height="12" viewBox="0 0 15 12"><path d="M0 0h15v1.500L7.500 7 0 1.500zM0 3.200L7.500 8.500 15 3.200V12H0z" fill="#d0d0d0" /></svg></Social>
              <Social $w={43}><FaFacebookF size={13} /></Social>
              <Social $w={48}><svg width="14" height="16" viewBox="0 0 14 16"><text x="0" y="12" fontFamily="Open Sans" fontWeight="700" fontSize="14" fill="#d0d0d0" textLength="14" lengthAdjust="spacingAndGlyphs">git</text></svg></Social>
              <Social $w={55}><svg width="20" height="15" viewBox="0 0 20 15"><path d="M10 0l9 4.500-8 5.500-9-4z" fill="#d0d0d0" /><path d="M2 6c-2 1-1 3 .5 3.200L10 12.500l8.500-5.200M19 4.500v4L16 10M8 12v2.500l1.500-1 1 1V12" fill="none" stroke="#d0d0d0" strokeWidth="1.300" /></svg></Social>
              <Social $w={45} $pad={1}><svg width="14" height="11" viewBox="0 0 14 11"><path d="M1.500 0h11L14 1.500v8L12.500 11h-11L0 9.500v-8zM5 2.700v5.600l4.500-2.800z" fill="#d0d0d0" fillRule="evenodd" /></svg></Social>
              <Social $w={1} $pad={0} />
            </SocialList>
            <Links>Privacy Policy | Terms</Links>
            <Recommended>
              Recommended
              <div>
                <FaChrome size={15} />
                <svg width="15" height="15" viewBox="0 0 15 15"><path d="M1.500.5L3 2q2-1 3.500-.5L5.500 4l2 .8-2.500 2q0 2.500 3 2.500L10 8.500q.5-2-1.300-3.500V3.500L7.500 1Q12 0 14.200 4.500 15.500 9 12.500 12.500 8 16 3 13-1 9.500.5 4.500z" fill="#d5d5d5" /></svg>
                <svg width="15" height="15" viewBox="0 0 15 15"><circle cx="7.500" cy="7.500" r="7.300" fill="#d5d5d5" /><circle cx="7.500" cy="7.500" r="5.900" fill="none" stroke="#555" strokeWidth=".7" /><path d="M11.500 3L8.500 8.500 3.500 12 6.500 6.500z" fill="#888" /><path d="M11.500 3L3.500 12" stroke="#222" /></svg>
              </div>
            </Recommended>
          </Footer>
        </Page>
        <Scrollbar>
          <svg width="8" height="5" viewBox="0 0 8 5"><path d="M0 5l4-4.500L8 5z" fill="#505050" /></svg>
          <Thumb />
          <svg width="8" height="5" viewBox="0 0 8 5"><path d="M0 0l4 4.500L8 0z" fill="#999" /></svg>
        </Scrollbar>
        <KeyDialog />
      </Viewport>
      <SystemBar />
    </Screen>
  );
}
